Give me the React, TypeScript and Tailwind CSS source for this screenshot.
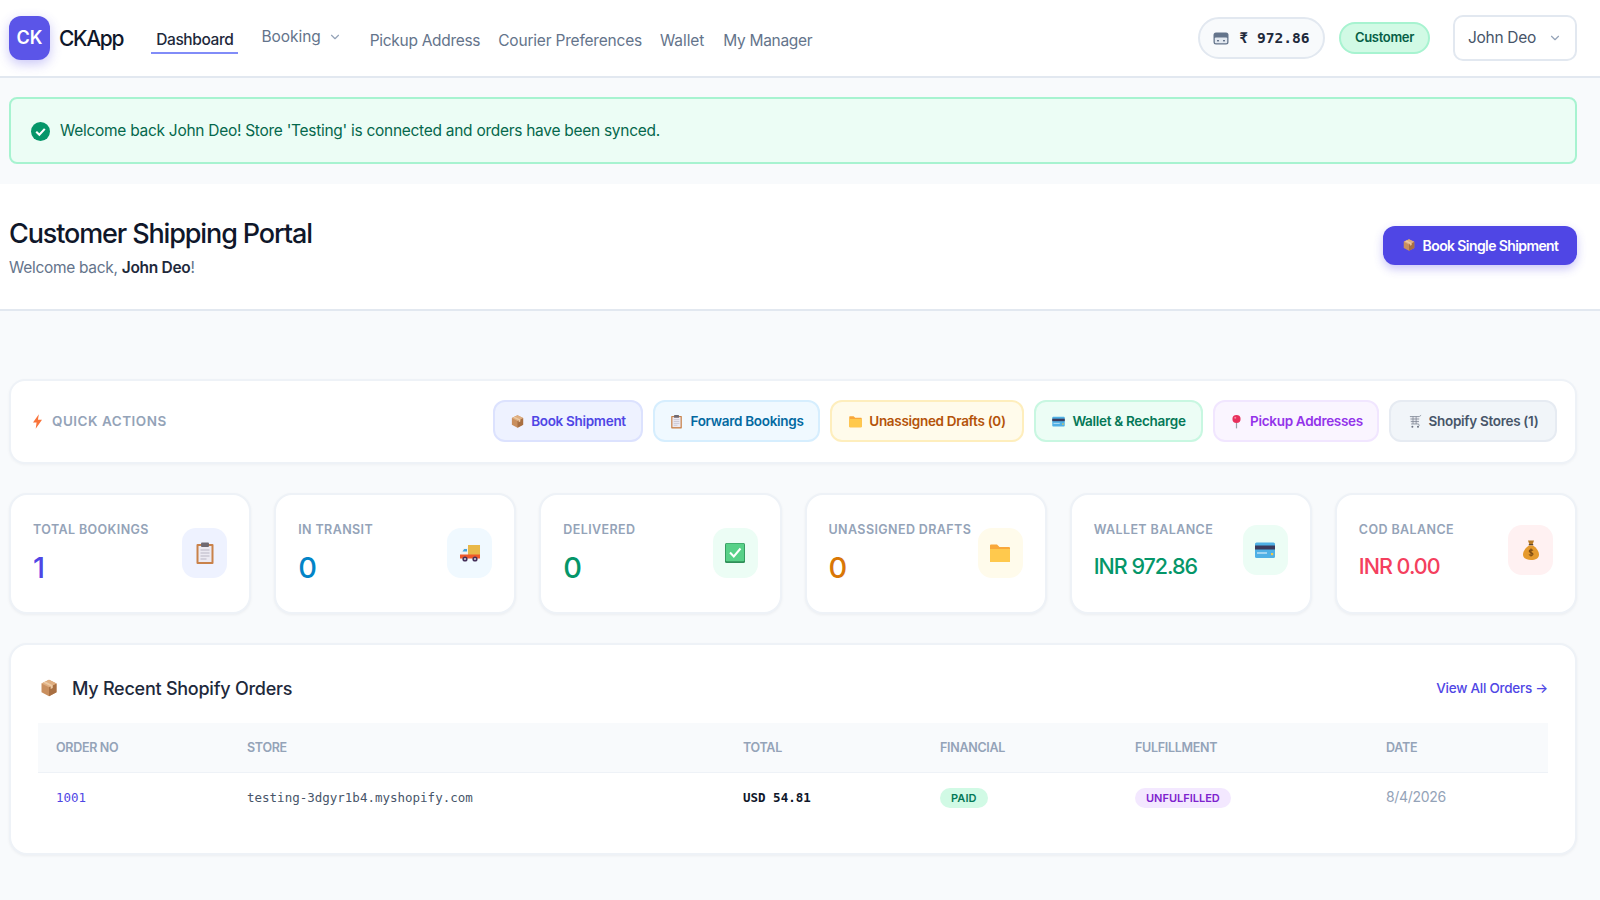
import React from 'react';
import { ChevronDown } from 'lucide-react';

type IconProps = { className?: string };

const PackageIcon: React.FC<IconProps> = ({ className }) => (
  <svg viewBox="0 0 24 24" className={className}>
    <path d="M12 2 21 6.5V17L12 22 3 17V6.5Z" fill="#c98f5e" />
    <path d="M12 11 21 6.5V17L12 22Z" fill="#a86f42" />
    <path d="M12 2 21 6.5 12 11 3 6.5Z" fill="#dfae80" />
    <path d="M7.5 4.2 16.5 8.8V12L14 13.2V10L5 5.4Z" fill="#eccaa4" />
  </svg>
);

const ClipboardIcon: React.FC<IconProps> = ({ className }) => (
  <svg viewBox="0 0 24 24" className={className}>
    <rect x="3.5" y="3" width="17" height="20" rx="1" fill="#c9824a" />
    <rect x="5.5" y="5" width="13" height="16" fill="#eceaf2" />
    <rect x="8" y="1.5" width="8" height="4.5" rx="1" fill="#6f6a72" />
    <path d="M7.5 9h9M7.5 12h9M7.5 15h9M7.5 18h6" stroke="#b9b6c4" strokeWidth="1" />
  </svg>
);

const TruckIcon: React.FC<IconProps> = ({ className }) => (
  <svg viewBox="0 0 24 24" className={className}>
    <rect x="10" y="4" width="12" height="11" fill="#e9b949" />
    <path d="M3 10.5 5.5 7H10v8H2.5Z" fill="#f2f2f2" />
    <path d="M4.5 10.5 6.2 8H9v2.5Z" fill="#46a5dc" />
    <rect x="2" y="13.5" width="20" height="4" fill="#ef5a2a" />
    <circle cx="7" cy="18" r="2.6" fill="#46325a" />
    <circle cx="17" cy="18" r="2.6" fill="#46325a" />
    <circle cx="7" cy="18" r="1" fill="#d8d4de" />
    <circle cx="17" cy="18" r="1" fill="#d8d4de" />
  </svg>
);

const CheckIcon: React.FC<IconProps> = ({ className }) => (
  <svg viewBox="0 0 24 24" className={className}>
    <rect x="2" y="2" width="20" height="20" rx="1.5" fill="#2f8f58" />
    <rect x="2.8" y="2.6" width="18.4" height="17.6" rx="1" fill="#58d188" />
    <path d="M7 11.5 10.8 15.5 17.5 7.5" fill="none" stroke="#fff" strokeWidth="2" />
  </svg>
);

const FolderIcon: React.FC<IconProps> = ({ className }) => (
  <svg viewBox="0 0 24 24" className={className}>
    <path d="M2 4.5A1 1 0 0 1 3 3.5H9L11.5 6H21A1 1 0 0 1 22 7V20A1 1 0 0 1 21 21H3A1 1 0 0 1 2 20Z" fill="#f9a83a" />
    <path d="M2 8H22V20A1 1 0 0 1 21 21H3A1 1 0 0 1 2 20Z" fill="#ffc94d" />
  </svg>
);

const CardIcon: React.FC<IconProps> = ({ className }) => (
  <svg viewBox="0 0 24 24" className={className}>
    <rect x="2" y="4.5" width="20" height="15.5" rx="1.5" fill="#4fb0e5" />
    <rect x="2" y="7.5" width="20" height="4" fill="#3b3a5c" />
    <path d="M4 15h10" stroke="#d7ecf8" strokeWidth="1.2" />
    <rect x="18" y="15" width="2.2" height="2.2" fill="#f0c94b" />
  </svg>
);

const MoneyBagIcon: React.FC<IconProps> = ({ className }) => (
  <svg viewBox="0 0 24 24" className={className}>
    <path d="M9 2.5h6l-1.5 4.2h-3Z" fill="#b87a24" />
    <rect x="9.8" y="6" width="4.4" height="1.4" fill="#5e4a34" />
    <path d="M10 7.4C6 10 4 13.5 4 16.5 4 20.5 7.5 22 12 22S20 20.5 20 16.5C20 13.5 18 10 14 7.4Z" fill="#e59a2e" />
    <path d="M14 12.5C13.4 11.7 10.4 11.4 10.2 13 10 15 14.2 14.2 14 16.2 13.8 17.8 10.6 17.5 10 16.5M12 10.5V18.5" fill="none" stroke="#7a4a14" strokeWidth="1.1" />
  </svg>
);

const PinIcon: React.FC<IconProps> = ({ className }) => (
  <svg viewBox="0 0 24 24" className={className}>
    <path d="M12 13v10" stroke="#9aa0a8" strokeWidth="2" />
    <circle cx="12" cy="8" r="6.5" fill="#e8305c" />
    <circle cx="10" cy="6" r="1.6" fill="#f58aa4" />
  </svg>
);

const CartIcon: React.FC<IconProps> = ({ className }) => (
  <svg viewBox="0 0 24 24" className={className}>
    <path d="M3 4h15l-1 12H5Z" fill="#e6e8ee" />
    <path d="M3 4h15M4 8h14M4.5 12h13M8 4v12M13 4v12M18 4l3-2M5 16h12M17 16l1 3" fill="none" stroke="#7d8694" strokeWidth="1.2" />
    <circle cx="7" cy="20.5" r="1.6" fill="#6b7280" />
    <circle cx="16" cy="20.5" r="1.6" fill="#6b7280" />
  </svg>
);

// the monochrome card glyph in the wallet pill
const WalletGlyph: React.FC<IconProps> = ({ className }) => (
  <svg viewBox="0 0 16 13" className={className}>
    <rect x="0.5" y="0.5" width="15" height="12" rx="2.5" fill="#64748b" />
    <rect x="1.8" y="5.5" width="12.4" height="5.8" rx="1" fill="#e2e8f0" />
    <rect x="4" y="8" width="2" height="1.4" fill="#64748b" />
    <rect x="10" y="8" width="2" height="1.4" fill="#64748b" />
  </svg>
);

const quickActions = [
  { label: 'Book Shipment', icon: PackageIcon, cls: 'w-[150px] bg-[#eef2ff] border-[#dce2fe] text-[#4f46e5]' },
  { label: 'Forward Bookings', icon: ClipboardIcon, cls: 'w-[167px] bg-[#f0f9ff] border-[#d6eefe] text-[#0369a1]' },
  { label: 'Unassigned Drafts (0)', icon: FolderIcon, cls: 'w-[194px] bg-[#fffbeb] border-[#feeebd] text-[#b45309]' },
  { label: 'Wallet & Recharge', icon: CardIcon, cls: 'w-[169px] bg-[#ecfdf5] border-[#c8f7e1] text-[#047857]' },
  { label: 'Pickup Addresses', icon: PinIcon, cls: 'w-[166px] bg-[#faf5ff] border-[#f1e6ff] text-[#9333ea]' },
  { label: 'Shopify Stores (1)', icon: CartIcon, cls: 'w-[168px] bg-[#f1f5f9] border-[#e6ebf2] text-[#475569]' },
];

const stats = [
  { label: 'Total Bookings', value: '1', icon: ClipboardIcon, box: 'bg-[#eef2ff]', text: 'text-[#4f46e5]', big: true },
  { label: 'In Transit', value: '0', icon: TruckIcon, box: 'bg-[#f0f9ff]', text: 'text-[#0284c7]', big: true },
  { label: 'Delivered', value: '0', icon: CheckIcon, box: 'bg-[#ecfdf5]', text: 'text-[#059669]', big: true },
  { label: 'Unassigned Drafts', value: '0', icon: FolderIcon, box: 'bg-[#fffbeb]', text: 'text-[#d97706]', big: true },
  { label: 'Wallet Balance', value: 'INR 972.86', icon: CardIcon, box: 'bg-[#ecfdf5]', text: 'text-[#059669]', big: false },
  { label: 'COD Balance', value: 'INR 0.00', icon: MoneyBagIcon, box: 'bg-[#fff1f2]', text: 'text-[#f43f5e]', big: false },
];

const navLink = 'mt-[5px] text-[15.5px] text-[#64748b]';
const thClass = 'px-[18px] pt-[2px] text-left text-[12.5px] font-semibold tracking-[-0.3px] uppercase text-[#94a3b8]';
const mono = "font-['DejaVu_Sans_Mono','Liberation_Mono',monospace]";

export default function App() {
  return (
    <div className="min-h-[900px] bg-[#f8fafc] font-['Inter','Liberation_Sans',sans-serif] text-[#0f172a]">
      {/* top bar */}
      <header className="flex h-[78px] items-center justify-between border-b-2 border-[#e2e8f0] bg-white pl-[9px] pr-[23px]">
        <div className="flex items-center">
          <div className="flex h-11 w-[41px] items-center justify-center rounded-xl bg-[#5b55e8] pb-[2px] text-[18px] font-semibold text-white shadow-[0_4px_12px_rgba(79,70,229,0.3)]">
            CK
          </div>
          <span className="ml-[9px] mt-[2px] text-[21px] font-medium tracking-[-1.3px] text-[#0f172a]">CKApp</span>
          <nav className="ml-[28px] flex items-center">
            <a className="mt-[6px] border-b-2 border-[#818cf8] px-[5px] text-[15.5px] font-medium tracking-[-0.4px] text-[#1e293b]">Dashboard</a>
            <a className="-mt-[3px] ml-[23px] flex items-center text-[15.5px] tracking-[-0.05px] text-[#64748b]">
              Booking
              <ChevronDown className="ml-[7px] text-[#94a3b8]" size={14} />
            </a>
            <a className={`ml-[28px] tracking-[-0.3px] ${navLink}`}>Pickup Address</a>
            <a className={`ml-[18px] tracking-[-0.2px] ${navLink}`}>Courier Preferences</a>
            <a className={`ml-[18px] tracking-[-0.1px] ${navLink}`}>Wallet</a>
            <a className={`ml-[19px] tracking-[-0.3px] ${navLink}`}>My Manager</a>
          </nav>
        </div>
        <div className="flex items-center">
          <div className="flex h-[42px] w-[127px] items-center justify-center gap-[10px] rounded-[21px] border-2 border-[#e2e8f0] bg-[#f8fafc]">
            <WalletGlyph className="h-[13px] w-[16px]" />
            <span className={`${mono} text-[14.6px] font-bold text-[#1e293b]`}>₹ 972.86</span>
          </div>
          <div className="ml-[14px] flex h-8 w-[91px] items-center justify-center rounded-2xl border-2 border-[#a7f3d0] bg-[#d1fae5] text-[13px] font-semibold tracking-[-0.3px] text-[#065f46]">
            Customer
          </div>
          <div className="ml-[23px] flex h-[46px] w-[124px] items-center justify-center gap-3 rounded-[10px] border-2 border-[#e2e8f0] bg-white text-[15.5px] tracking-[-0.3px] text-[#475569]">
            John Deo
            <ChevronDown className="text-[#94a3b8]" size={14} />
          </div>
        </div>
      </header>

      <div className="pl-[9px] pr-[23px] pt-[19px]">
        <div className="flex h-[67px] items-center gap-[10px] rounded-lg border-2 border-[#a7f3d0] bg-[#ecfdf5] px-5 pt-[1px] text-[15.5px] tracking-[-0.28px] text-[#05684c]">
          <svg viewBox="0 0 20 20" className="h-[19px] w-[19px]">
            <circle cx="10" cy="10" r="10" fill="#059669" />
            <path d="M5.5 10.2 8.8 13.5 14.5 7.2" fill="none" stroke="#fff" strokeWidth="2.2" />
          </svg>
          Welcome back John Deo! Store 'Testing' is connected and orders have been synced.
        </div>
      </div>

      {/* page heading */}
      <section className="mt-5 flex h-[127px] items-center justify-between border-b-2 border-[#e2e8f0] bg-white pl-[9px] pr-[23px]">
        <div className="mt-[2px]">
          <h1 className="text-[27px] font-medium leading-[36px] tracking-[-1.13px] text-[#0f172a]">Customer Shipping Portal</h1>
          <p className="mt-[4px] text-[15.5px] tracking-[-0.3px] text-[#64748b]">
            Welcome back, <strong className="font-semibold text-[#1e293b]">John Deo</strong>!
          </p>
        </div>
        <button className="-mt-[3px] flex h-[39px] w-[194px] items-center justify-center gap-[7px] rounded-xl bg-[#4f46e5] text-[14px] font-semibold tracking-[-0.6px] text-white shadow-[0_4px_10px_rgba(79,70,229,0.3)]">
          <PackageIcon className="h-[14px] w-[14px]" />
          Book Single Shipment
        </button>
      </section>

      <main className="pl-[9px] pr-[23px] pt-[68px]">
        {/* quick actions */}
        <div className="flex h-[85px] items-center justify-between rounded-2xl border-2 border-[#eef2f7] bg-white pl-[22px] pr-[18px] shadow-[0_1px_3px_rgba(15,23,42,0.04)]">
          <div className="flex items-center gap-[10px] text-[13.5px] font-semibold tracking-[0.5px] uppercase text-[#94a3b8]">
            <svg viewBox="0 0 10 16" className="h-[15px] w-[9px]">
              <path d="M6.5 0 0 9h4l-1 7L10 6H5.5Z" fill="#f9733a" />
            </svg>
            Quick Actions
          </div>
          <div className="-mt-[2px] flex gap-[10px]">
            {quickActions.map((action) => {
              const Icon = action.icon;
              return (
                <div key={action.label} className={`flex h-[42px] items-center justify-center gap-[6px] rounded-xl border-2 pt-[2px] text-[13.5px] font-semibold tracking-[-0.3px] ${action.cls}`}>
                  <Icon className="h-[15px] w-[15px]" />
                  {action.label}
                </div>
              );
            })}
          </div>
        </div>

        {/* stats */}
        <div className="mt-[29px] grid grid-cols-6 gap-[23px]">
          {stats.map((stat) => {
            const Icon = stat.icon;
            return (
              <div key={stat.label} className="flex h-[121px] items-center justify-between rounded-[18px] border-2 border-[#eef2f7] bg-white pl-[22px] pr-[22px] shadow-[0_1px_3px_rgba(15,23,42,0.05)]">
                <div className="-mt-[3px]">
                  <div className="whitespace-nowrap text-[12.5px] font-semibold leading-[18px] tracking-[0.4px] uppercase text-[#94a3b8]">{stat.label}</div>
                  <div className={`leading-[32px] ${stat.big ? 'mt-[13px] text-[29px] font-medium' : 'mb-[2px] mt-[11px] text-[21.5px] font-medium tracking-[-1px]'} ${stat.text}`}>{stat.value}</div>
                </div>
                <div className={`flex h-[50px] w-[45px] shrink-0 items-center justify-center rounded-[14px] ${stat.big ? '-mt-[2px]' : '-mt-[8px]'} ${stat.box}`}>
                  <Icon className="h-[24px] w-[24px]" />
                </div>
              </div>
            );
          })}
        </div>

        {/* recent orders */}
        <div className="mt-[29px] h-[212px] rounded-[18px] border-2 border-[#eef2f7] bg-white px-[27px] shadow-[0_1px_3px_rgba(15,23,42,0.05)]">
          <div className="flex h-[78px] items-center justify-between pt-[8px]">
            <div className="flex items-center gap-[13px] pl-[1px] text-[18px] font-medium tracking-[-0.25px] text-[#1e293b]">
              <PackageIcon className="h-[20px] w-[20px]" />
              My Recent Shopify Orders
            </div>
            <a className="text-[13.5px] font-medium tracking-[-0.25px] text-[#4f46e5]">View All Orders →</a>
          </div>
          <table className="w-full table-fixed border-collapse">
            <thead>
              <tr className="h-[49px] border-b border-[#eef2f7] bg-[#f8fafc]">
                <th className={`w-[191px] ${thClass}`}>Order No</th>
                <th className={`w-[496px] ${thClass}`}>Store</th>
                <th className={`w-[197px] ${thClass}`}>Total</th>
                <th className={`w-[195px] ${thClass}`}>Financial</th>
                <th className={`w-[251px] ${thClass}`}>Fulfillment</th>
                <th className={thClass}>Date</th>
              </tr>
            </thead>
            <tbody>
              <tr className="h-[51px] text-[12.5px]">
                <td className={`px-[18px] pt-[2px] ${mono} text-[#4f46e5]`}>1001</td>
                <td className={`px-[18px] pt-[2px] ${mono} text-[#475569]`}>testing-3dgyr1b4.myshopify.com</td>
                <td className={`px-[18px] pt-[2px] ${mono} font-bold text-[#0f172a]`}>USD 54.81</td>
                <td className="px-[18px]">
                  <span className="inline-flex h-5 items-center rounded-[10px] bg-[#d1fae5] px-[11px] text-[11px] font-semibold tracking-[0.1px] text-[#047857]">PAID</span>
                </td>
                <td className="px-[18px]">
                  <span className="inline-flex h-5 items-center rounded-[10px] bg-[#f3e8ff] px-[11px] text-[11px] font-semibold tracking-[0px] text-[#7e22ce]">UNFULFILLED</span>
                </td>
                <td className="px-[18px] pb-[3px] text-[14px] tracking-[-0.3px] text-[#94a3b8]">8/4/2026</td>
              </tr>
            </tbody>
          </table>
        </div>
      </main>
    </div>
  );
}
